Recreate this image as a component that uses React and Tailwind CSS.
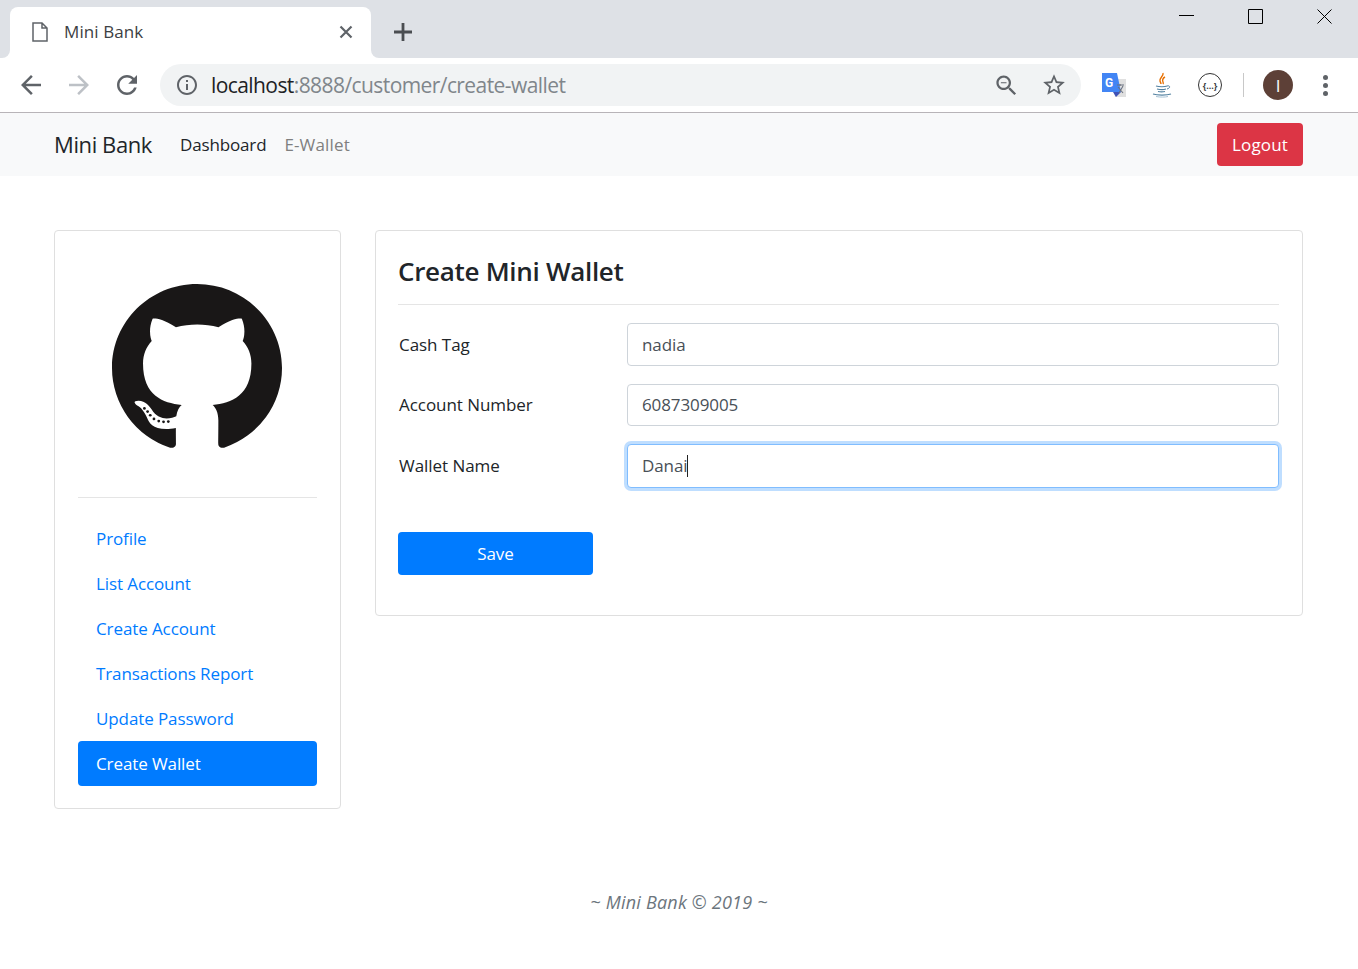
import React from 'react'

const font = { fontFamily: '"Open Sans", "Noto Sans", sans-serif' }

const sideLinks = ['Profile', 'List Account', 'Create Account', 'Transactions Report', 'Update Password']

// chrome's own toolbar glyphs, 24 unit box
const icons = {
  back: 'M20 11H7.83l5.59-5.59L12 4l-8 8 8 8 1.41-1.41L7.83 13H20v-2z',
  forward: 'M4 11h12.17l-5.59-5.59L12 4l8 8-8 8-1.41-1.41L16.170 13H4v-2z',
  reload: 'M17.65 6.35C16.2 4.9 14.21 4 12 4c-4.42 0-7.99 3.58-7.99 8s3.57 8 7.99 8c3.73 0 6.84-2.55 7.73-6h-2.08c-.82 2.33-3.04 4-5.65 4-3.31 0-6-2.69-6-6s2.69-6 6-6c1.66 0 3.14.69 4.22 1.78L13 11h7V4l-2.35 2.35z',
  info: 'M11 7h2v2h-2zm0 4h2v6h-2zm1-9C6.48 2 2 6.48 2 12s4.48 10 10 10 10-4.48 10-10S17.52 2 12 2zm0 18c-4.41 0-8-3.59-8-8s3.59-8 8-8 8 3.59 8 8-3.59 8-8 8z',
  zoomOut: 'M15.5 14h-.79l-.28-.27C15.41 12.59 16 11.11 16 9.5 16 5.91 13.09 3 9.5 3S3 5.91 3 9.5 5.91 16 9.5 16c1.61 0 3.09-.59 4.23-1.57l.27.28v.79l5 4.99L20.49 19l-4.99-5zm-6 0C7.01 14 5 11.99 5 9.5S7.01 5 9.5 5 14 7.01 14 9.5 11.99 14 9.5 14zM7 9h5v1H7z',
  star: 'M22 9.24l-7.19-.62L12 2 9.19 8.63 2 9.24l5.46 4.73L5.82 21 12 17.27 18.18 21l-1.63-7.03L22 9.24zM12 15.4l-3.76 2.27 1-4.28-3.32-2.88 4.38-.38L12 6.1l1.71 4.04 4.38.38-3.32 2.88 1 4.28L12 15.4z',
}

function Glyph({ d, className }) {
  return (
    <svg viewBox="0 0 24 24" className={className} fill="currentColor">
      <path d={d} />
    </svg>
  )
}

function GithubMark() {
  return (
    <svg viewBox="0 0 16 16" preserveAspectRatio="none" className="w-[170px] h-[168px]" fill="#191717">
      <path d="M8 0c4.42 0 8 3.58 8 8a8.013 8.013 0 0 1-5.45 7.59c-.4.08-.55-.17-.55-.38 0-.27.01-1.13.01-2.2 0-.75-.25-1.23-.54-1.48 1.78-.2 3.65-.88 3.65-3.95 0-.88-.31-1.59-.82-2.15.08-.2.36-1.02-.08-2.12 0 0-.67-.22-2.2.82-.64-.18-1.32-.27-2-.27-.68 0-1.36.09-2 .27-1.53-1.03-2.2-.82-2.2-.82-.44 1.1-.16 1.92-.08 2.12-.51.56-.82 1.28-.82 2.15 0 3.06 1.86 3.75 3.64 3.95-.23.2-.44.55-.51 1.07-.46.21-1.61.55-2.33-.66-.15-.24-.6-.83-1.23-.82-.67.01-.27.38.01.53.34.19.73.9.82 1.13.16.45.68 1.31 2.69.94 0 .67.01 1.3.01 1.49 0 .21-.15.45-.55.38A7.995 7.995 0 0 1 0 8c0-4.42 3.58-8 8-8Z" />
      {/* dots along the tail */}
      <g>
        <circle cx="3.05" cy="11.85" r=".13" />
        <circle cx="3.35" cy="12.15" r=".13" />
        <circle cx="3.6" cy="12.5" r=".13" />
        <circle cx="3.95" cy="12.85" r=".13" />
        <circle cx="4.4" cy="13.05" r=".13" />
        <circle cx="4.85" cy="13.12" r=".13" />
        <circle cx="5.3" cy="13.1" r=".13" />
      </g>
    </svg>
  )
}

function TranslateIcon() {
  return (
    <svg viewBox="0 0 24 24" className="w-6 h-6">
      <path d="M10 6h14v18H13z" fill="#e0e0e0" />
      <path d="M0 0h15l4 19H0z" fill="#4285f4" />
      <path d="M11 19h8l-5 5z" fill="#3f51b5" />
      <text x="7" y="14" fontSize="12" fontWeight="700" fill="#fff" textAnchor="middle" fontFamily="Roboto, sans-serif">G</text>
      <path d="M15 12h7M18 11v2M21 13l-4 7M16 14l5 6" stroke="#6b7280" strokeWidth="1.1" fill="none" />
    </svg>
  )
}

function JavaIcon() {
  return (
    <svg viewBox="0 0 24 26" className="w-6 h-[26px]" fill="none">
      <path d="M13 1c1 3-4 5-3 8 .3 1 1 2 1 3M15 5c-2 1-3 3-2 5 .3 .7.5 1.300 0 2" stroke="#e76f00" strokeWidth="1.400" />
      <path d="M6 14c3 1 9 1 11 0M7 17c3 .8 7 .8 9 0M8 19.500c2 .5 5 .5 7 0" stroke="#5382a1" strokeWidth="1.200" />
      <path d="M17 14c3-1 4 2 0 3" stroke="#5382a1" strokeWidth="1" />
      <path d="M3 22c4 1.500 14 1.500 18 0" stroke="#5382a1" strokeWidth="1.200" />
      <path d="M6 24.500c4 .8 9 .8 12 0" stroke="#a8c2d4" strokeWidth="1" />
    </svg>
  )
}

function WindowControls() {
  return (
    <div className="flex items-start text-black">
      <svg viewBox="0 0 15 1" className="w-[15px] h-px mt-[15px]"><path d="M0 .5h15" stroke="currentColor" /></svg>
      <svg viewBox="0 0 15 15" className="w-[15px] h-[15px] mt-[9px] ml-[54px]" fill="none"><path d="M.5.5h14v14H.5z" stroke="currentColor" /></svg>
      <svg viewBox="0 0 15 15" className="w-[15px] h-[15px] mt-[9px] ml-[54px] mr-[26px]" fill="none"><path d="M.5.5l14 14M14.500.5l-14 14" stroke="currentColor" /></svg>
    </div>
  )
}

function BrowserChrome() {
  return (
    <div className="text-[#3c4043]" style={{ fontFamily: '"Open Sans", sans-serif' }}>
      <div className="flex h-[58px] bg-white">
        <div className="w-[10px] bg-[#dee1e6] rounded-br-lg" />
        <div className="w-[361px] bg-[#dee1e6]">
          <div className="mt-[7px] h-[51px] bg-white rounded-t-lg flex items-center pl-[22px] pr-[18px] pb-[1px]">
            <svg viewBox="0 0 16 20" className="w-4 h-5 text-[#5f6368]" fill="none">
              <path d="M1 1h9l5 5v13H1zM10 1v5h5" stroke="currentColor" strokeWidth="1.500" />
            </svg>
            <span className="ml-[16px] text-[17px] tracking-[0.1px] flex-1">Mini Bank</span>
            <svg viewBox="0 0 14 14" className="w-[14px] h-[14px] text-[#5f6368]"><path d="M1.500 1.500l11 11M12.500 1.500l-11 11" stroke="currentColor" strokeWidth="2.200" /></svg>
          </div>
        </div>
        <div className="flex-1 flex justify-between bg-[#dee1e6] rounded-bl-lg">
          <svg viewBox="0 0 18 18" className="w-[18px] h-[18px] ml-[23px] mt-[23px] text-[#4a4d51]"><path d="M9 0v18M0 9h18" stroke="currentColor" strokeWidth="2.800" /></svg>
          <WindowControls />
        </div>
      </div>
      <div className="h-[54px] flex items-center bg-white">
        <Glyph d={icons.back} className="w-[30px] h-[30px] ml-[16px] text-[#5f6368]" />
        <Glyph d={icons.forward} className="w-[30px] h-[30px] ml-[18px] text-[#bdc1c6]" />
        <Glyph d={icons.reload} className="w-[30px] h-[30px] ml-[18px] text-[#5f6368]" />
        <div className="ml-[18px] w-[921px] h-[42px] bg-[#f1f3f4] rounded-full flex items-center pl-[15px] pr-[14px]">
          <Glyph d={icons.info} className="w-6 h-6 text-[#5f6368]" />
          <span className="ml-[12px] pt-[2px] text-[21px] tracking-[-0.58px] flex-1 text-[#80868b]">
            <span className="text-[#202124]">localhost</span>:8888/customer/create-wallet
          </span>
          <Glyph d={icons.zoomOut} className="w-[27px] h-[27px] text-[#5f6368]" />
          <Glyph d={icons.star} className="w-[26px] h-[26px] ml-[21px] text-[#5f6368]" />
        </div>
        <div className="ml-[21px]"><TranslateIcon /></div>
        <div className="ml-[24px]"><JavaIcon /></div>
        <div className="ml-[24px] w-6 h-6 rounded-full border-[1.5px] border-[#333] flex items-center justify-center text-[9px] font-bold leading-none">{'{...}'}</div>
        <div className="ml-[21px] w-px h-6 bg-[#c8c8c8]" />
        <div className="ml-[19px] w-[30px] h-[30px] rounded-full bg-[#5d4037] text-white flex items-center justify-center text-[17px] leading-none">I</div>
        <div className="ml-[30px] flex flex-col gap-[3px]">
          <span className="w-[5px] h-[5px] rounded-full bg-[#5f6368]" />
          <span className="w-[5px] h-[5px] rounded-full bg-[#5f6368]" />
          <span className="w-[5px] h-[5px] rounded-full bg-[#5f6368]" />
        </div>
      </div>
      <div className="h-px bg-[#b8b4b8]" />
    </div>
  )
}

function FormRow({ label, value, height, focused }) {
  return (
    <div className="flex items-center">
      <label className="w-[229px] pl-px tracking-[-0.05px]">{label}</label>
      {focused ? (
        <div className={`flex-1 ${height} flex items-center px-[14px] rounded border border-[#80bdff] bg-white text-[#495057] shadow-[0_0_0_3px_rgba(0,123,255,0.25)]`}>
          {value}
          <span className="w-px h-[22px] bg-[#222]" />
        </div>
      ) : (
        <div className={`flex-1 ${height} flex items-center px-[14px] rounded border border-[#ced4da] text-[#495057]`}>{value}</div>
      )}
    </div>
  )
}

export default function App() {
  return (
    <div className="min-h-[969px] bg-white text-[#212529] text-[17px] tracking-[-0.1px]" style={font}>
      <BrowserChrome />

      <nav className="h-[63px] bg-[#f8f9fa] flex items-center pl-[54px] pr-[55px]">
        <span className="text-[22px] tracking-[-0.4px]">Mini Bank</span>
        <span className="ml-[28px] tracking-[-0.15px]">Dashboard</span>
        <span className="ml-[18px] text-[#7f7f7f] tracking-[0.15px]">E-Wallet</span>
        <button className="ml-auto w-[86px] h-[43px] bg-[#dc3545] text-white rounded tracking-[0.15px]">Logout</button>
      </nav>

      <main className="flex items-start gap-[34px] pt-[54px] pl-[54px] pr-[55px]">
        <aside className="w-[287px] h-[579px] shrink-0 border border-[#dfdfdf] rounded px-[23px]">
          <div className="flex justify-center pt-[53px] pr-[1px] h-[267px] border-b border-[#e5e5e5]">
            <GithubMark />
          </div>
          <div className="mt-[18px] flex flex-col">
            {sideLinks.map((l) => (
              <a key={l} className="h-[45px] flex items-center px-[18px] text-[#007bff]">{l}</a>
            ))}
            <a className="h-[45px] flex items-center px-[18px] bg-[#007bff] text-white rounded">Create Wallet</a>
          </div>
        </aside>

        <section className="flex-1 h-[386px] border border-[#dfdfdf] rounded pl-[22px] pr-[23px]">
          <h2 className="h-[74px] pt-[20px] text-[26px] leading-[40px] font-semibold tracking-[-0.3px] border-b border-[#e5e5e5]">Create Mini Wallet</h2>
          <div className="mt-[18px] flex flex-col gap-[18px]">
            <FormRow label="Cash Tag" value="nadia" height="h-[43px]" />
            <FormRow label="Account Number" value="6087309005" height="h-[42px]" />
            <FormRow label="Wallet Name" value="Danai" height="h-[44px]" focused />
          </div>
          <button className="mt-[44px] w-[195px] h-[43px] bg-[#007bff] text-white rounded">Save</button>
        </section>
      </main>

      <footer className="mt-[80px] text-center italic text-[18px] tracking-[0.2px] text-[#6c757d]">~ Mini Bank © 2019 ~</footer>
    </div>
  )
}
